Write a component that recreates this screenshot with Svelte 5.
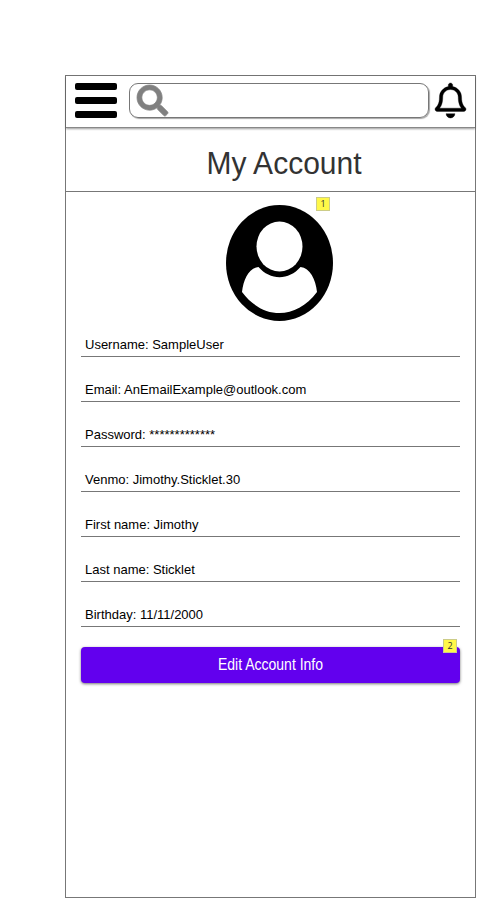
<script>
  const fields = [
    { label: 'Username', value: 'SampleUser' },
    { label: 'Email', value: 'AnEmailExample@outlook.com' },
    { label: 'Password', value: '*************' },
    { label: 'Venmo', value: 'Jimothy.Sticklet.30' },
    { label: 'First name', value: 'Jimothy' },
    { label: 'Last name', value: 'Sticklet' },
    { label: 'Birthday', value: '11/11/2000' }
  ];
</script>

<main class="phone">
  <header>
    <div class="menu"><i></i><i></i><i></i></div>
    <div class="search">
      <svg width="31" height="31" viewBox="0 0 512 512" fill="#808080" stroke="#808080" stroke-width="12"><path d="M505 442.7L405.3 343c-4.5-4.5-10.6-7-17-7H372c27.6-35.3 44-79.7 44-128C416 93.1 322.9 0 208 0S0 93.1 0 208s93.1 208 208 208c48.3 0 92.7-16.4 128-44v16.3c0 6.4 2.5 12.5 7 17l99.7 99.7c9.4 9.4 24.6 9.4 33.9 0l28.3-28.3c9.4-9.4 9.4-24.6.1-34zM208 336c-70.7 0-128-57.2-128-128 0-70.7 57.2-128 128-128 70.7 0 128 57.2 128 128 0 70.7-57.2 128-128 128z"/></svg>
    </div>
    <svg class="bell" width="31" height="35" viewBox="0 0 448 512" preserveAspectRatio="none" stroke="#000" stroke-width="5"><path d="M439.39 362.29c-19.32-20.76-55.47-51.99-55.47-154.29 0-77.7-54.48-139.9-127.94-155.16V32c0-17.67-14.32-32-31.98-32s-31.98 14.33-31.98 32v20.84C118.56 68.1 64.08 130.3 64.08 208c0 102.3-36.15 133.53-55.47 154.29-6 6.45-8.66 14.16-8.61 21.71.11 16.4 12.98 32 32.1 32h383.8c19.12 0 32-15.6 32.1-32 .05-7.55-2.61-15.27-8.61-21.71zM67.53 368c21.22-27.97 44.42-74.33 44.53-159.42 0-.2-.06-.38-.06-.58 0-61.86 50.14-112 112-112s112 50.14 112 112c0 .2-.06.38-.06.58.11 85.1 23.31 131.46 44.53 159.42H67.53zM224 512c35.32 0 63.97-28.65 63.97-64H160.03c0 35.35 28.65 64 63.97 64z"/></svg>
  </header>

  <h1><span>My Account</span></h1>

  <div class="avatar">
    <svg width="107" height="116" viewBox="0 0 107 116">
      <ellipse cx="53.5" cy="58" rx="53.5" ry="58"/>
      <ellipse cx="53.5" cy="41.5" rx="23" ry="25" fill="#fff"/>
      <path fill="#fff" d="M16 87C17.500 74 23 63 32.500 62C44 75.500 63 75.500 74.500 62C84 63 89.500 74 91 87C70 115 37 115 16 87Z"/>
    </svg>
    <b class="note">1</b>
  </div>

  <section>
    {#each fields as field}
      <div class="field">{field.label}: {field.value}</div>
    {/each}
  </section>

  <button><span>Edit Account Info</span><b class="note">2</b></button>
</main>

<style>
  :global(body) { background: #fff; }
  .phone {
    box-sizing: border-box;
    width: 411px;
    height: 823px;
    margin: 75px 0 0 65px;
    border: 1px solid #777;
    font-family: "Liberation Sans", Arial, sans-serif;
    color: #000;
  }
  header {
    box-sizing: border-box;
    display: flex;
    align-items: flex-start;
    height: 52px;
    padding: 7px 9px 0;
    border-bottom: 1px solid #888;
    box-shadow: 0 1px 2px rgba(0, 0, 0, .4);
  }
  .menu { display: flex; flex-direction: column; gap: 7px; width: 42px; margin-right: 12px; }
  .menu i { height: 7px; border-radius: 2px; background: #000; }
  .search {
    box-sizing: border-box;
    width: 300px;
    height: 35px;
    padding: 1px 7px;
    border: 1px solid #777;
    border-radius: 9px;
    box-shadow: 1px 1px 1px rgba(0, 0, 0, .35);
  }
  svg { display: block; flex: none; overflow: visible; }
  .bell { margin-left: 6px; }
  h1 {
    box-sizing: border-box;
    height: 64px;
    margin: 0;
    padding-left: 27px;
    border-bottom: 1px solid #777;
    font-size: 30px;
    font-weight: 400;
    line-height: 71px;
    text-align: center;
    color: #333;
  }
  h1 span { display: inline-block; transform: scaleY(1.03); }
  .avatar { position: relative; width: 107px; margin: 13px 0 0 160px; }
  .note {
    position: absolute;
    box-sizing: border-box;
    width: 14px;
    height: 14px;
    border: 1px solid #cccc88;
    background: #fff849;
    color: #333;
    font: 9px/12px "Open Sans", sans-serif;
    text-align: center;
  }
  .avatar .note { left: 90px; top: -8px; }
  section { margin: 0 15px; padding-top: 1px; }
  .field {
    box-sizing: border-box;
    height: 45px;
    padding: 0 4px;
    border-bottom: 1px solid #777;
    font-size: 13px;
    line-height: 65px;
    white-space: nowrap;
  }
  .field:first-child { height: 35px; line-height: 45px; }
  button {
    position: relative;
    display: block;
    width: 379px;
    height: 36px;
    margin: 20px 15px 0;
    padding: 0;
    border: 0;
    border-radius: 4px;
    background: #6200ee;
    box-shadow: 0 1px 3px rgba(0, 0, 0, .55);
    color: #fff;
    font: 14px/36px "Liberation Sans", Arial, sans-serif;
  }
  button span { display: inline-block; transform: translateY(-1px) scaleY(1.12); }
  button .note { right: 3px; top: -8px; }
</style>
